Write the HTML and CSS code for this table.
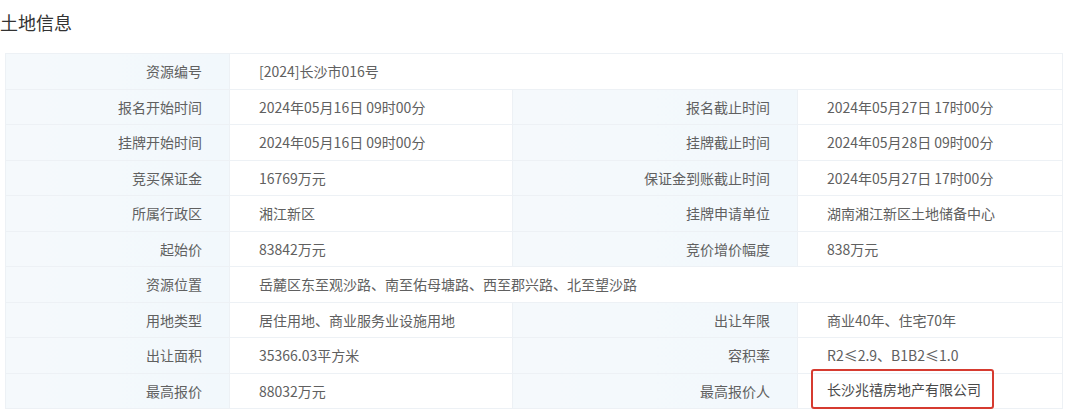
FILE: index.html
```html
<!DOCTYPE html>
<html lang="zh-CN">
<head>
    <meta charset="UTF-8">
    <title>土地信息</title>
    <link rel="stylesheet" href="styles.css">
</head>
<body>
    <h3 class="title">土地信息</h3>
    <table class="land">
        <colgroup>
            <col class="c1"><col class="c2"><col class="c3"><col class="c4">
        </colgroup>
        <tr>
            <th>资源编号</th>
            <td colspan="3">[2024]长沙市016号</td>
        </tr>
        <tr>
            <th>报名开始时间</th><td>2024年05月16日 09时00分</td>
            <th>报名截止时间</th><td>2024年05月27日 17时00分</td>
        </tr>
        <tr>
            <th>挂牌开始时间</th><td>2024年05月16日 09时00分</td>
            <th>挂牌截止时间</th><td>2024年05月28日 09时00分</td>
        </tr>
        <tr>
            <th>竞买保证金</th><td>16769万元</td>
            <th>保证金到账截止时间</th><td>2024年05月27日 17时00分</td>
        </tr>
        <tr>
            <th>所属行政区</th><td>湘江新区</td>
            <th>挂牌申请单位</th><td>湖南湘江新区土地储备中心</td>
        </tr>
        <tr>
            <th>起始价</th><td>83842万元</td>
            <th>竞价增价幅度</th><td>838万元</td>
        </tr>
        <tr>
            <th>资源位置</th>
            <td colspan="3">岳麓区东至观沙路、南至佑母塘路、西至郡兴路、北至望沙路</td>
        </tr>
        <tr>
            <th>用地类型</th><td>居住用地、商业服务业设施用地</td>
            <th>出让年限</th><td>商业40年、住宅70年</td>
        </tr>
        <tr>
            <th>出让面积</th><td>35366.03平方米</td>
            <th>容积率</th><td>R2≤2.9、B1B2≤1.0</td>
        </tr>
        <tr>
            <th>最高报价</th><td>88032万元</td>
            <th>最高报价人</th><td><span class="mark">长沙兆禧房地产有限公司</span></td>
        </tr>
    </table>
</body>
</html>
```

FILE: styles.css
```css
body {
    margin: 0;
    font-family: "Noto Sans CJK SC", "Microsoft YaHei", sans-serif;
    color: #606060;
    background: #fff;
}

.title {
    margin: 0;
    padding: 9px 0 0 0;
    height: 53px;
    box-sizing: border-box;
    font-size: 18px;
    font-weight: normal;
    color: #333;
}

.land {
    margin-left: 5px;
    width: 1057px;
    border-collapse: collapse;
    table-layout: fixed;
    font-size: 14px;
}

.c1 { width: 224px; }
.c2 { width: 283px; }
.c3 { width: 285px; }
.c4 { width: 265px; }

.land th,
.land td {
    height: 35.5px;
    padding: 0;
    border: 1px solid #edf1f5;
    box-sizing: border-box;
    white-space: nowrap;
    line-height: 20px;
}

.land th {
    font-weight: normal;
    text-align: right;
    padding-right: 27px;
    background: linear-gradient(90deg, #f5f9fc, #f2f8fc);
    color: #606060;
}

.land td {
    text-align: left;
    padding-left: 29px;
    background: #fff;
}

.mark {
    display: inline-block;
    vertical-align: middle;
    margin: -6px 0 -2px -16px;
    padding: 8px 11px 8px 14px;
    border: 2px solid #d63b30;
    border-radius: 3px;
    color: #4a4a4a;
}
```
